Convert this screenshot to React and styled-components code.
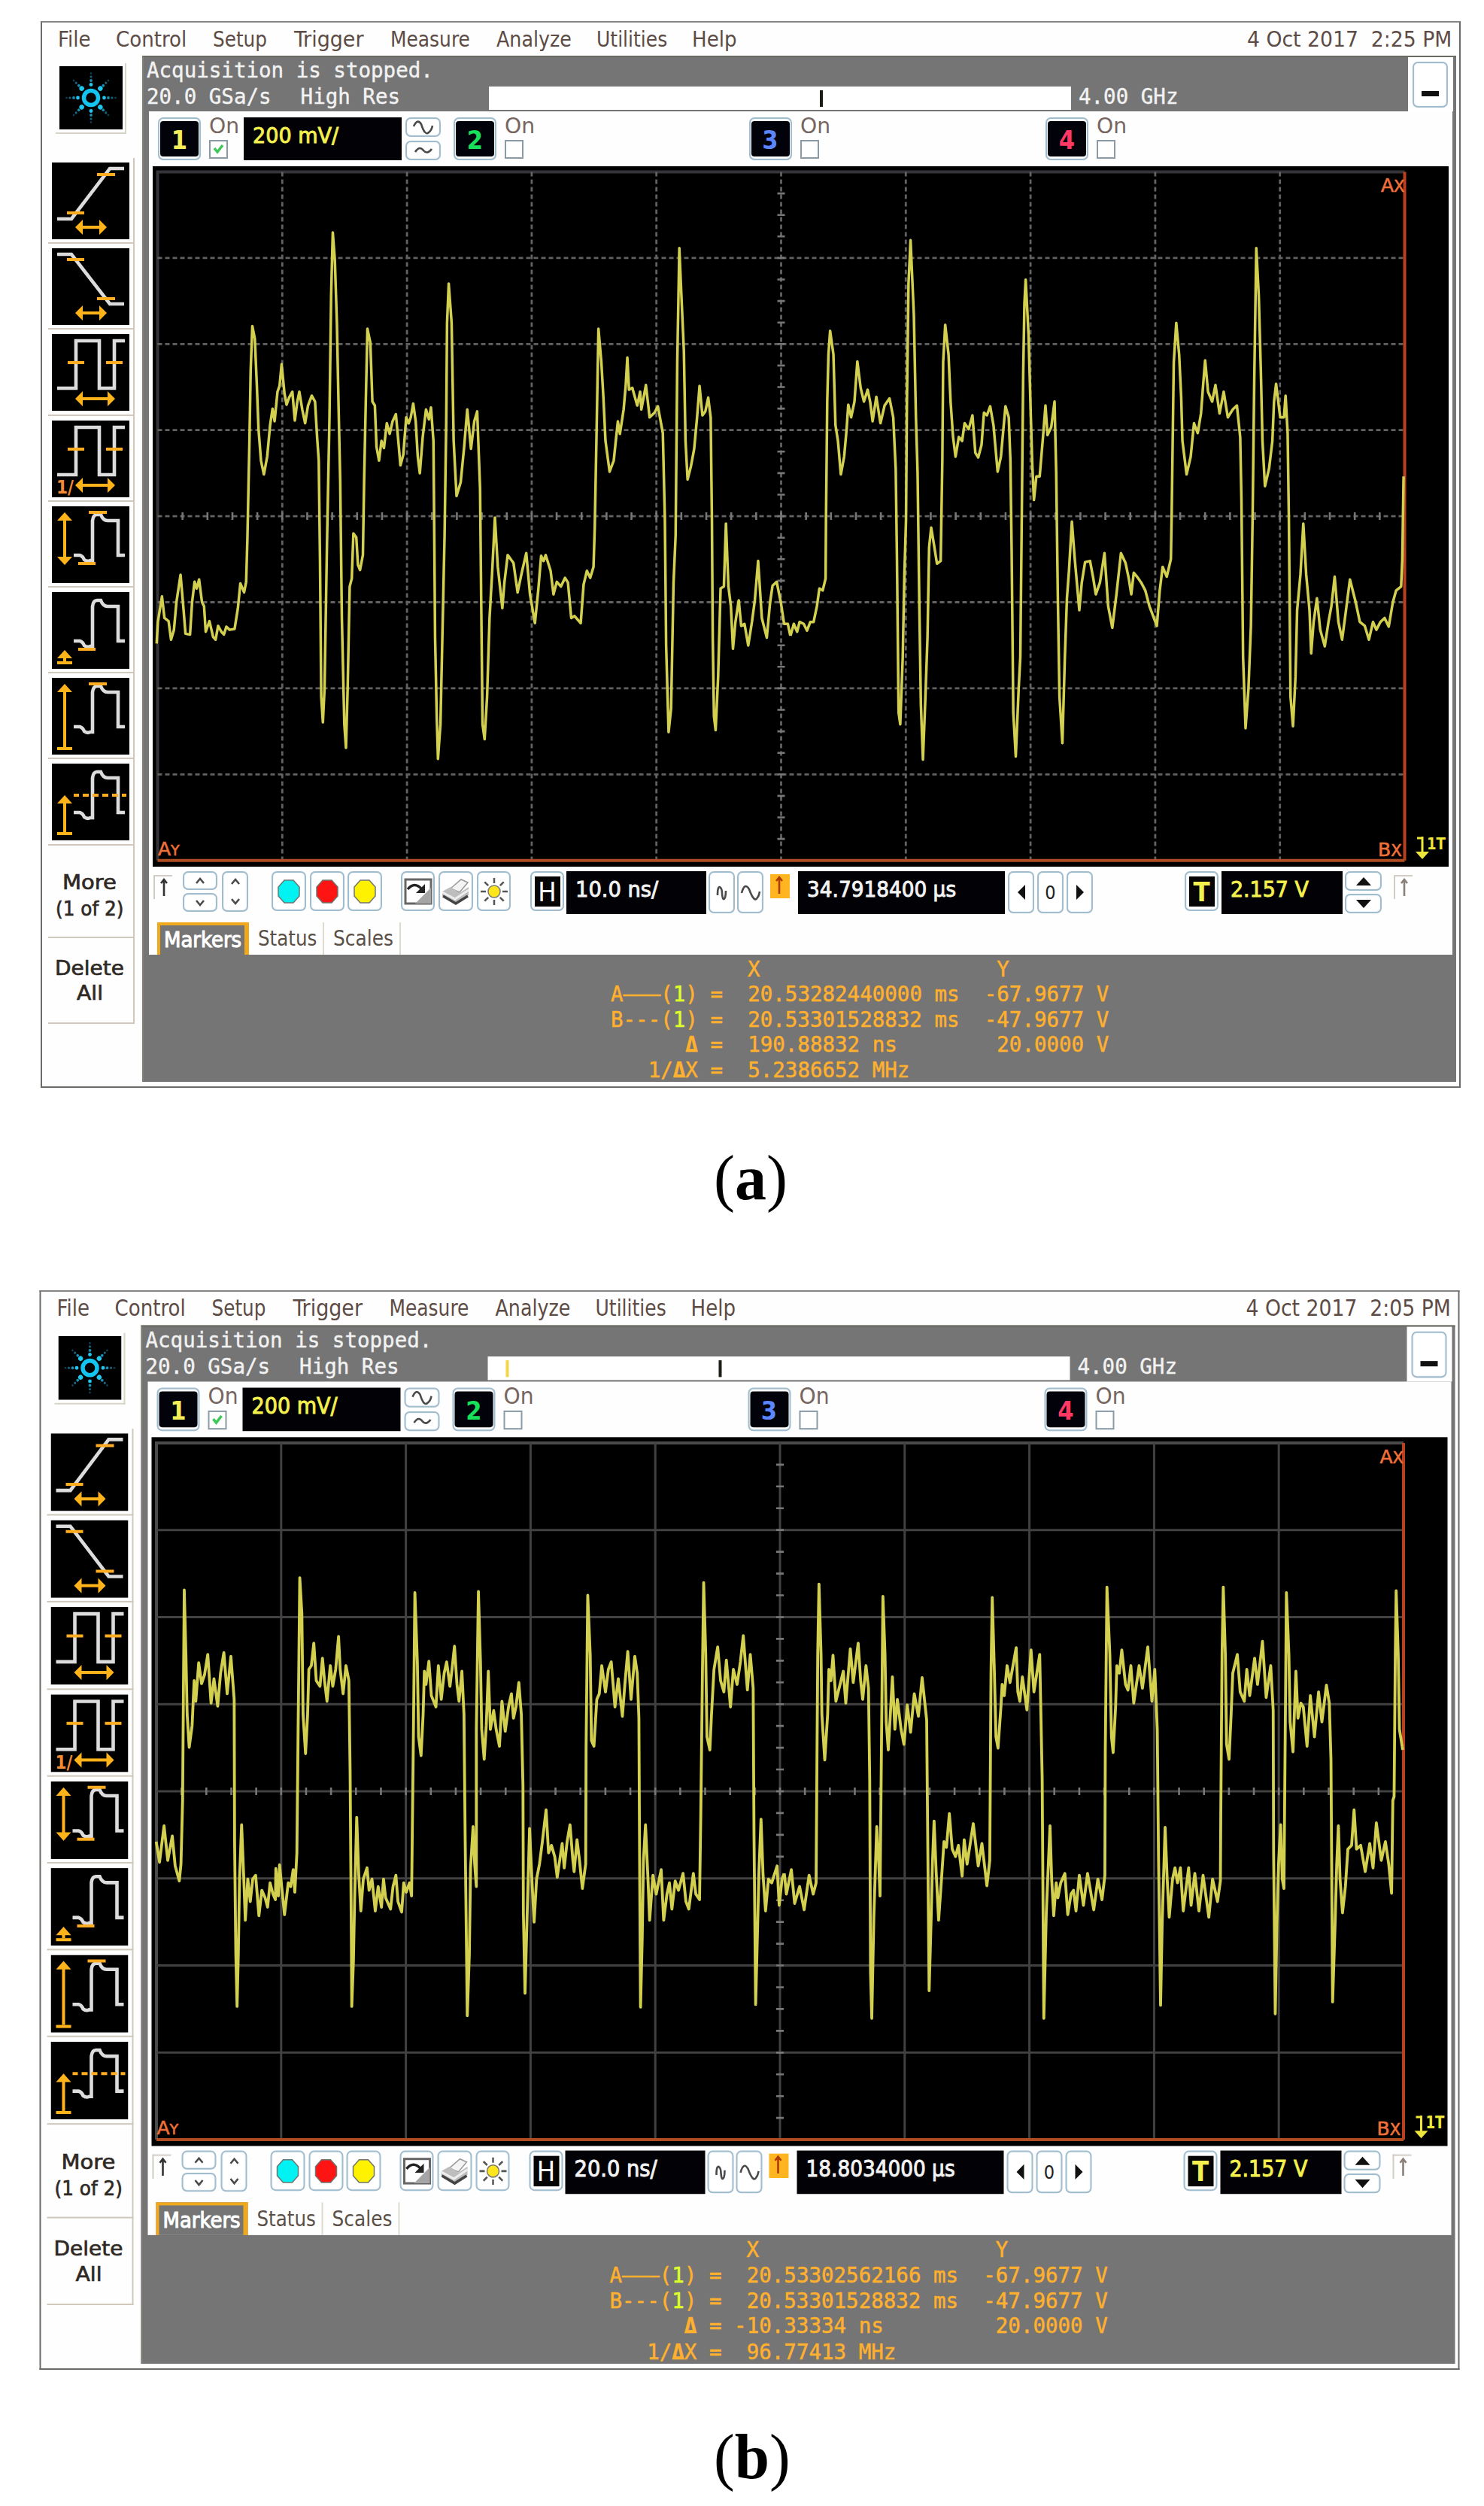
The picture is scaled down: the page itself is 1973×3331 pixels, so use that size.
import React, { useLayoutEffect, useRef, useState } from "react";
import styled, { createGlobalStyle, css } from "styled-components";

const SANS = `"DejaVu Sans Condensed", "DejaVu Sans", sans-serif`;
const MONO = `"DejaVu Sans Mono", monospace`;
const ORANGE = "#ffb02e";

const GlobalStyle = createGlobalStyle`
  body {
    margin: 0;
    background: #fff;
    font-family: ${SANS};
  }
`;

const Page = styled.div`
  box-sizing: border-box;
  width: 1973px;
  height: 3331px;
  padding: 28px 0 0 54px;
  overflow: hidden;
  background: #fff;
`;
const Figure = styled.div`
  height: ${props => props.$height}px;
`;
const Caption = styled.div`
  display: flex;
  margin: ${props => props.$gap}px 0 0 895px;
  font: 84px/90px "Liberation Serif", serif;
  color: #000;
`;
const Scope = styled.div`
  box-sizing: border-box;
  width: 1888px;
  height: 1418px;
  border: 2px solid #6c6a66;
  border-top-color: #858585;
  background: #fefefe;
  transform-origin: 0 0;
  transform: translateX(${props => props.$shift}px) scaleY(${props => props.$stretch});
`;

const MenuBar = styled.div`
  display: grid;
  grid-template-columns: 77px 129px 108px 128px 141px 133px 127px 738px 1fr;
  height: 44px;
  padding-left: 21px;
  font-size: 29px;
  line-height: 45px;
  color: #5d4c45;
`;
const Body = styled.div`
  display: flex;
  height: 1364px;
`;

/* left column */
const Sidebar = styled.div`
  width: 133px;
  flex: none;
`;
const LogoKey = styled.div`
  box-sizing: border-box;
  width: 94px;
  height: 94px;
  margin: 10px 0 32px 18px;
  padding: 4px 0 0 5px;
  border: solid #d9d4c8;
  border-width: 0 2px 2px 0;
  svg {
    display: block;
  }
`;
const Key = styled.div`
  box-sizing: border-box;
  width: 115px;
  height: ${props => props.$height || 114.2}px;
  margin-left: 8px;
  padding: ${props => props.$top || 6}px 0 0 4.5px;
  border: solid #cfc8bb;
  border-width: 0 2px 2px 0;
  svg {
    display: block;
  }
`;
const KeyText = styled.div`
  display: flex;
  flex-direction: column;
  align-items: center;
  width: 101px;
  font-size: 26px;
  line-height: ${props => props.$line}px;
  color: #2f2925;
  -webkit-text-stroke: 0.6px #2f2925;
`;

/* right part */
const Main = styled.div`
  box-sizing: border-box;
  width: 1747px;
  height: 1364px;
  border-top: 2px solid #6b6b64;
  border-left: 2px solid #807e76;
  background: #757575;
`;
const StatusBar = styled.div`
  display: flex;
  height: 72px;
`;
const StatusInfo = styled.div`
  display: grid;
  grid-template-columns: 455px 774px 1fr;
  grid-template-rows: 35.4px 36px;
  width: 1677px;
  padding-left: 4px;
  font: 27.5px/35.4px ${MONO};
  color: #f2f2f2;
  -webkit-text-stroke: 0.4px #f2f2f2;
`;
const StatusLine = styled.div`
  display: flex;
  gap: 39px;
  white-space: pre;
  grid-area: ${props => props.$row} / 1;
`;
const Bandwidth = styled.div`
  grid-area: 2 / 3;
  padding-left: 10px;
`;
const MemoryBar = styled.div`
  display: flex;
  grid-area: 2 / 2;
  height: 31px;
  margin-top: 4px;
  background: #fff;
`;
const MemoryTick = styled.i`
  width: 4px;
  height: 22px;
  margin: 5px 0 0 ${props => props.$gap}px;
  background: ${props => props.$color};
`;
const MinimizeCell = styled.div`
  box-sizing: border-box;
  width: 60px;
  padding: 6px 0 0 6px;
  background: #fff;
`;
const Button = styled.div`
  box-sizing: border-box;
  display: flex;
  flex: none;
  align-items: center;
  justify-content: center;
  width: ${props => props.$w}px;
  height: ${props => props.$h}px;
  border: 2px solid #a0bccd;
  border-radius: 7px;
  background: #fff;
  box-shadow: inset 0 0 2px #d3e1e8;
`;
const Dash = styled.div`
  width: 23px;
  height: 7px;
  margin-top: 24px;
  background: #111;
`;
const Panel = styled.div`
  width: 1733px;
  height: 1121px;
  margin-left: 7px;
  background: #fefefe;
`;

const Channels = styled.div`
  box-sizing: border-box;
  display: grid;
  grid-template-columns: 393px 392.5px 394.5px 1fr;
  height: 73px;
  padding: 8px 0 0 12px;
`;
const Channel = styled.div`
  display: flex;
  align-items: flex-start;
`;
const Digit = styled.div`
  box-sizing: border-box;
  width: 51px;
  height: 47px;
  border-radius: 4px;
  background: #02020a;
  color: ${props => props.color};
  font: bold 34px/50px ${SANS};
  text-align: center;
`;
const OnBox = styled.div`
  width: 46px;
  margin-left: 11px;
  margin-top: -6px;
  font-size: 29px;
  line-height: 34px;
  color: #776560;
`;
const Check = styled.div`
  box-sizing: border-box;
  width: 25px;
  height: 25px;
  margin-top: 2px;
  border: 2px solid #8a9ba5;
  background: #fff;
  svg {
    display: block;
  }
`;
const Readout = styled.div`
  box-sizing: border-box;
  flex: none;
  width: ${props => props.$w}px;
  height: 57px;
  padding-left: 12px;
  background: #010106;
  color: ${props => props.color || "#f2f2f2"};
  font-size: 29px;
  line-height: 48px;
  -webkit-text-stroke: 0.9px currentColor;
`;
const Stack = styled.div`
  display: flex;
  flex-direction: column;
  gap: ${props => props.$gap || 5}px;
`;

const PlotBox = styled.div`
  width: 1723px;
  height: 931px;
  margin-left: 5px;
  background: #000;
  svg {
    display: block;
  }
`;

const Toolbar = styled.div`
  display: flex;
  align-items: flex-start;
  height: 74px;
  box-sizing: border-box;
  padding: 6px 0 0 6px;
`;
const Gap = styled.div`
  width: ${props => props.$w}px;
  flex: none;
`;
const ArrowBox = styled.div`
  box-sizing: border-box;
  width: 25px;
  height: 32px;
  margin-top: 5px;
  border: solid #d2cdc4;
  border-width: 2px 0 0 2px;
  svg {
    display: block;
  }
`;
const LetterTile = styled.div`
  width: 34px;
  height: 40px;
  background: #050505;
  color: ${props => props.color};
  font: 36px/41px ${SANS};
  font-weight: ${props => (props.$bold ? "bold" : "normal")};
  text-align: center;
`;
const OrangeTile = styled.div`
  width: 26px;
  height: 32px;
  margin-top: 4px;
  background: #ffb51f;
`;
const ZeroLabel = styled.span`
  font-size: 25px;
  color: #222;
`;

const Tabs = styled.div`
  display: flex;
  height: 43px;
  padding-left: 11px;
  font-size: 28px;
  line-height: 43px;
  color: #5b5048;
`;
const Tab = styled.div`
  box-sizing: border-box;
  width: ${props => props.$w}px;
  padding: 0 0 0 12px;
  border-right: 2px solid #dedad0;
  ${props =>
    props.$active &&
    css`
      padding-left: 5px;
      border: solid #f0a81c;
      border-width: 4px 6px 0 4px;
      background: #757575;
      color: #fff;
      line-height: 40px;
      -webkit-text-stroke: 1px #fff;
    `}
`;
const Markers = styled.div`
  padding: 3px 0 0 621px;
  font: 27.5px/33.4px ${MONO};
  color: ${ORANGE};
  white-space: pre;
  -webkit-text-stroke: 0.5px ${ORANGE};
  em {
    font-style: normal;
    color: #dfff2a;
    -webkit-text-stroke-color: #dfff2a;
  }
`;

const FitBox = styled.span`
  display: block;
  width: ${props => props.$w}px;
  white-space: pre;
  span {
    display: inline-block;
    transform-origin: 0 50%;
  }
`;

// squeezes a label to the width it has on the instrument's screen
const Fit = ({ w, children }) => {
  const ref = useRef(null);
  const [ratio, setRatio] = useState(1);
  useLayoutEffect(() => {
    setRatio(w / ref.current.offsetWidth);
  }, [w]);
  return (
    <FitBox $w={w}>
      <span ref={ref} style={{ transform: `scaleX(${ratio})` }}>
        {children}
      </span>
    </FitBox>
  );
};

const Logo = () => (
  <svg width="84" height="84" viewBox="-42 -42 84 84">
    <rect x="-42" y="-42" width="84" height="84" fill="#000" />
    <circle r="9.5" fill="none" stroke="#14c4f0" strokeWidth="5.5" />
    {[0, 45, 90, 135, 180, 225, 270, 315].map(a => (
      <g key={a} transform={`rotate(${a})`}>
        <circle cx="17.5" r={a % 90 ? 3.2 : 2.4} fill="#1fc8f0" />
        <circle cx="23" r="1.9" fill="#1a8fb0" />
        <circle cx="28" r="1.6" fill="#17627c" />
        <circle cx="32.5" r="1.3" fill="#0f4458" />
      </g>
    ))}
  </svg>
);

const HArrow = ({ x1, x2 }) => (
  <g fill="#ffb31a">
    <rect x={x1 + 5} y="84" width={x2 - x1 - 10} height="4" />
    <path d={`M${x1} 86l10-10v20zM${x2} 86l-10-10v20z`} />
  </g>
);
const VArrow = ({ y1, y2, both }) => (
  <g fill="#ffb31a">
    <rect x="15" y={y1 + 5} width="4" height={y2 - y1 - 7} />
    <path d={`M17 ${y1}l10 11h-20z`} />
    {both ? (
      <path d={`M17 ${y2}l10 -11h-20z`} />
    ) : (
      <rect x="7" y={y2 - 2} width="20" height="4" />
    )}
  </g>
);
const BUMP = "M29 65H37Q41 66 43 71Q47 74 51 72H54V19Q55 11 60 11H65Q68 19 74 19H88V65H97";
const PULSE = "M7 72H32V9H63V72H83V9H97";

const ICONS = [
  {
    line: "M7 75H26L77 8H96",
    ticks: "M20 67H43M60 16H84",
    extra: <HArrow x1={31} x2={73} />
  },
  {
    line: "M7 8H26L77 74H96",
    ticks: "M20 15H43M60 67H84",
    extra: <HArrow x1={31} x2={73} />
  },
  {
    line: PULSE,
    ticks: "M21 38H43M72 38H94",
    extra: <HArrow x1={31} x2={84} />
  },
  {
    line: PULSE,
    ticks: "M21 38H43M72 38H94",
    extra: (
      <g>
        <HArrow x1={31} x2={84} />
        <text x="6" y="97" fontSize="24" fontWeight="bold" fill="#f58a35">
          1/
        </text>
      </g>
    )
  },
  {
    line: BUMP,
    ticks: "M49 8H73M35 76H58",
    extra: <VArrow y1={8} y2={78} both />
  },
  { line: BUMP, ticks: "M35 76H58", extra: <VArrow y1={77} y2={94} /> },
  { line: BUMP, ticks: "M49 8H73", extra: <VArrow y1={8} y2={94} /> },
  {
    line: BUMP,
    ticks: "M29 42h7m5 0h8m5 0h8m5 0h8m5 0h8m5 0h6",
    extra: <VArrow y1={42} y2={93} />
  }
];

const MeasureIcon = ({ icon }) => (
  <svg width="103" height="102" viewBox="0 0 103 102">
    <rect width="103" height="102" fill="#000" />
    <path d={icon.line} fill="none" stroke="#dcdcdc" strokeWidth="4.6" />
    <path d={icon.ticks} stroke="#ffac20" strokeWidth="4" />
    {icon.extra}
  </svg>
);

const Glyph = ({ w, h, d, fill = "none", width = 2.6 }) => (
  <svg width={w} height={h} viewBox={`0 0 ${w} ${h}`}>
    <path d={d} fill={fill} stroke={fill === "none" ? "#4a4a4a" : "none"} strokeWidth={width} />
  </svg>
);
const UP = "M2 9L7 3L12 9";
const DOWN = "M2 3L7 9L12 3";

const Dot = ({ color }) => (
  <Button $w={46} $h={53}>
    <svg width="34" height="34" viewBox="0 0 34 34">
      <path
        d="M11 2H23L31 11V23L23 32H11L3 23V11Z"
        fill={color}
        stroke="#6f7570"
        strokeWidth="1.5"
      />
    </svg>
  </Button>
);
const ClearIcon = () => (
  <svg width="38" height="36" viewBox="0 0 38 36">
    <rect x="2" y="2" width="34" height="32" fill="#fff" stroke="#666" strokeWidth="3" />
    <path d="M36 13V34H15Z" fill="#a5a5a5" />
    <path d="M5 15Q14 4 24 15" fill="none" stroke="#222" strokeWidth="3.5" />
    <path d="M28 8V20H16Z" fill="#222" />
  </svg>
);
const PrintIcon = () => (
  <svg width="40" height="38" viewBox="0 0 40 38">
    <path d="M13 15L27 3L36 7L25 20Z" fill="#f4f4f4" stroke="#999" strokeWidth="1.5" />
    <path d="M2 19L13 13L25 21L37 13V24L20 35L2 25Z" fill="#bdbdbd" />
    <path d="M2 20L19 29L37 17" fill="none" stroke="#eee" strokeWidth="3" />
    <path d="M3 25L20 35L36 25" fill="none" stroke="#444" strokeWidth="3.5" />
  </svg>
);
const SunIcon = () => (
  <svg width="40" height="40" viewBox="-20 -20 40 40">
    {[0, 45, 90, 135, 180, 225, 270, 315].map(a => (
      <path key={a} d="M11 0H18" stroke="#555" strokeWidth="2.5" transform={`rotate(${a})`} />
    ))}
    <circle r="8" fill="#ffe61c" stroke="#777" strokeWidth="1.5" />
  </svg>
);
const UpArrow = ({ color = "#333" }) => (
  <svg width="24" height="30" viewBox="0 0 24 30">
    <path d="M12 26V5M8 9L12 4L16 9" fill="none" stroke={color} strokeWidth="2.6" />
  </svg>
);

const COLS = [1, 2, 3, 4, 5, 6, 7, 8, 9];
const ROWS = [1, 2, 3, 4, 5, 6, 7];
const LEFT = 6.5;
const TOP = 7.5;
const DX = 165.8;
const DY = 114.4;
const RIGHT = LEFT + DX * 10;
const BOTTOM = TOP + DY * 8;

const Plot = ({ trace, solid }) => {
  const minor = [];
  for (let i = 1; i < 50; i++) {
    const x = LEFT + (i * DX) / 5;
    minor.push(`M${x} ${TOP + DY * 4 - 5}v10`);
  }
  for (let i = 1; i < 40; i++) {
    const y = TOP + (i * DY) / 4;
    if (y < BOTTOM) minor.push(`M${LEFT + DX * 5 - 5} ${y}h10`);
  }
  return (
    <PlotBox>
      <svg width="1723" height="931" viewBox="0 0 1723 931">
        <path
          d={`M${LEFT} ${BOTTOM}V${TOP}H${RIGHT}`}
          fill="none"
          stroke={solid ? "#4a4a4a" : "#353539"}
          strokeWidth="4"
        />
        <g
          stroke={solid ? "#414141" : "#626262"}
          strokeWidth={solid ? 3 : 2.8}
          strokeDasharray={solid ? "none" : "6 4"}
        >
          {COLS.map(c => (
            <path key={c} d={`M${LEFT + DX * c} ${TOP}V${BOTTOM}`} />
          ))}
          {ROWS.map(r => (
            <path key={r} d={`M${LEFT} ${TOP + DY * r}H${RIGHT}`} />
          ))}
        </g>
        <path d={minor.join("")} stroke="#777" strokeWidth="2.6" />
        <path d={`M${RIGHT} ${TOP}V${BOTTOM}`} stroke="#b8401f" strokeWidth="4" />
        <path d={`M${LEFT} ${BOTTOM}H${RIGHT}`} stroke="#b04c22" strokeWidth="4" />
        <g
          fill="none"
          stroke="#d3d050"
          strokeWidth={solid ? 3.8 : 3.5}
          strokeLinejoin="round"
          transform={trace.fit}
        >
          <polyline points={trace.first} vectorEffect="non-scaling-stroke" />
          <polyline
            points={trace.second}
            transform="translate(1531.5 0)"
            vectorEffect="non-scaling-stroke"
          />
        </g>
        <g fill="#f0703a" stroke="#f0703a" strokeWidth="0.6" fontFamily="DejaVu Sans" fontSize="25">
          <text x="1633" y="34">A<tspan fontSize="21">X</tspan></text>
          <text x="7" y="916">A<tspan fontSize="19">Y</tspan></text>
          <text x="1629" y="917">B<tspan fontSize="21">X</tspan></text>
        </g>
        <path d="M1681 893H1689M1688 891V917" stroke="#efe63a" strokeWidth="3" fill="none" />
        <path d="M1679 911H1697L1688 921Z" fill="#efe63a" />
        <text
          x="1694"
          y="908"
          fontFamily="DejaVu Sans"
          fontWeight="bold"
          fontSize="22"
          textLength="25"
          lengthAdjust="spacingAndGlyphs"
          fill="#efe63a"
        >
          1T
        </text>
      </svg>
    </PlotBox>
  );
};

const traceA = {
  fit: "matrix(0.5485 0 0 0.523 -3 -1)",
  first:
    "15,1215 18,1160 28,1095 34,1150 44,1158 50,1205 57,1180 63,1110 73,1040 80,1125 85,1190 96,1192 101,1110 107,1058 112,1075 118,1052 125,1110 130,1120 134,1185 143,1158 152,1198 158,1205 164,1170 172,1185 178,1192 184,1172 192,1180 204,1178 212,1125 218,1062 227,1085 232,1058 235,950 240,700 243,520 247,408 253,440 258,560 262,670 268,750 275,785 283,740 290,660 296,618 301,650 308,575 313,560 318,505 325,580 330,608 336,590 344,575 350,648 356,600 361,575 368,620 375,655 382,610 391,585 399,600 404,690 408,750 411,1000 414,1350 418,1415 422,1330 428,960 434,640 438,330 442,170 447,240 452,400 456,610 460,800 464,1150 470,1420 474,1480 478,1330 483,1070 488,1050 492,935 499,945 503,1015 508,1028 515,990 518,800 522,600 526,415 533,450 538,600 544,610 548,715 554,750 560,700 566,718 573,655 580,682 587,650 595,632 600,690 606,762 613,735 620,640 626,655 631,640 637,605 643,650 648,740 653,782 660,690 668,620 675,645 680,615 686,700 688,940 690,1200 694,1400 697,1508 703,1420 708,1180 713,940 717,650 719,400 723,300 730,400 735,700 742,840 752,805 760,720 768,620 777,720 785,650 792,625 799,820 802,1130 805,1420 810,1458 816,1350 822,1150 828,1040 835,895 842,1020 853,1125 858,1060 866,990 880,1010 890,1085 900,1035 911,985 920,1090 932,1163 940,1080 947,992 953,1005 958,990 970,1030 977,1090 985,1058 995,1070 1005,1048 1012,1060 1020,1150 1028,1145 1043,1163 1050,1065 1058,1030 1066,1048 1074,1020 1077,920 1081,700 1086,415 1093,500 1098,590 1103,700 1113,778 1123,750 1133,650 1138,682 1147,620 1152,560 1156,488 1160,570 1168,565 1180,610 1187,575 1190,620 1201,558 1210,640 1222,628 1230,612 1242,680 1247,900 1250,1220 1256,1440 1262,1380 1268,1060 1273,940 1277,500 1282,210 1287,330 1293,470 1297,700 1302,798 1310,765 1318,720 1325,640 1331,560 1338,635 1345,625 1352,590 1358,640 1361,900 1363,1200 1366,1400 1370,1435 1376,1300 1382,1075 1390,1070 1395,910 1401,1070 1407,1120 1412,1228 1418,1160 1426,1105 1432,1170 1440,1165 1449,1220 1458,1160 1465,1105 1473,1005 1482,1150 1494,1200 1502,1110 1508,1068 1518,1058 1528,1110 1536,1165 1545,1165 1551,1195",
  second:
    "20,1195 28,1165 36,1185 42,1160 52,1165 60,1182 68,1160 76,1160 84,1120 90,1075 98,1080 105,1050 106,900 109,600 112,480 116,420 124,480 129,660 135,700 142,785 150,740 156,670 160,608 167,640 175,600 182,498 190,565 198,600 207,570 213,600 219,650 228,588 238,655 248,610 260,592 269,640 275,770 278,1000 282,1390 286,1420 292,1250 296,1040 300,900 302,620 306,300 311,190 319,380 324,640 328,780 332,1100 336,1370 341,1510 347,1350 352,1200 356,970 361,920 368,965 375,1012 384,1005 388,750 390,500 395,405 403,480 408,600 414,690 420,740 428,690 436,700 442,655 452,670 461,635 468,730 475,742 483,710 489,628 496,635 504,612 512,660 522,778 530,740 541,612 549,640 553,750 556,980 560,1390 566,1502 573,1330 577,1250 580,950 584,530 587,350 590,290 597,430 602,620 606,760 610,850 616,790 624,790 632,690 638,610 643,685 652,665 660,600 664,780 668,1100 672,1350 679,1468 685,1250 690,1100 695,1030 702,905 709,1000 720,1130 726,1060 734,1008 746,1005 754,1050 760,1090 770,1060 781,985 790,1120 800,1175 810,1090 821,985 832,1010 840,1050 846,1090 852,1035 860,1045 870,1060 880,1080 890,1120 908,1170 915,1080 922,1020 932,1045 942,1000 944,880 949,500 955,400 962,480 967,590 970,700 980,785 990,740 998,655 1007,680 1015,630 1020,560 1025,495 1032,575 1042,600 1050,558 1060,630 1070,575 1080,640 1092,620 1102,610 1110,690 1113,850 1117,1250 1123,1430 1130,1330 1136,1170 1140,900 1144,550 1149,210 1155,330 1160,520 1164,700 1170,815 1180,770 1188,700 1192,600 1197,555 1207,640 1216,640 1220,585 1225,680 1228,900 1232,1350 1238,1425 1244,1300 1248,1130 1256,1040 1263,910 1270,1040 1278,1130 1282,1240 1288,1160 1296,1100 1304,1180 1315,1222 1324,1160 1331,1120 1339,1045 1348,1160 1357,1205 1364,1150 1376,1052 1390,1110 1400,1160 1412,1170 1422,1205 1432,1160 1440,1180 1450,1160 1460,1150 1470,1172 1480,1110 1488,1080 1500,1070 1503,1000 1506,790"
};

const traceB = {
  fit: "matrix(0.5485 0 0 0.4917 -1.5 88.7)",
  first:
    "14,900 22,955 33,858 42,950 53,885 60,965 70,1005 74,960 78,790 80,500 82,228 86,400 89,560 94,648 101,590 106,470 110,525 117,422 124,478 131,455 139,400 147,530 154,465 163,538 170,450 178,395 186,505 195,405 203,520 204,900 207,1200 210,1340 213,1200 216,1000 221,855 226,990 230,1110 236,1000 242,1060 248,1000 255,990 263,1098 270,1030 278,1050 284,1075 290,1010 297,1040 303,1055 304,972 310,1045 313,962 319,1030 325,1095 334,1010 340,1020 346,975 350,1035 355,930 358,600 362,195 367,290 370,560 376,665 381,560 384,440 390,430 396,370 402,470 411,485 417,410 422,470 428,525 436,430 442,485 449,440 456,352 460,440 467,505 474,430 481,470 484,710 487,1150 488,1340 492,1220 495,1050 500,835 505,990 510,1085 516,1000 525,970 530,1030 537,1000 545,1085 552,1020 560,1075 565,1000 570,1050 582,1080 588,1020 595,990 600,1060 609,1088 614,1010 620,1035 628,1010 633,1045 637,660 641,235 647,420 650,620 656,670 661,560 664,445 668,480 675,418 681,510 692,540 698,430 705,520 712,450 718,420 726,485 731,440 737,378 743,480 748,525 755,445 760,560 763,900 768,1365 773,1200 776,970 782,860 786,960 790,1020 790,600 795,232 800,420 803,600 809,680 814,590 819,445 824,600 832,550 838,600 846,645 852,525 860,605 868,540 875,505 880,570 886,540 893,475 899,560 903,750 904,1090 908,1305 913,1100 919,865 925,1010 930,1115 936,1000 943,960 950,900 959,815 965,930 972,910 980,940 986,995 998,905 1003,970 1010,900 1017,855 1024,950 1027,980 1034,895 1040,950 1047,1025 1055,960 1056,650 1060,242 1066,400 1069,630 1075,645 1082,520 1088,505 1094,430 1103,500 1110,440 1117,420 1126,540 1134,465 1144,565 1150,480 1157,392 1165,520 1174,405 1180,450 1184,570 1186,1000 1188,1342 1192,1160 1195,950 1200,855 1206,1000 1210,1110 1218,990 1226,1040 1238,975 1244,1110 1252,1040 1258,1010 1264,1080 1272,1005 1280,1030 1291,985 1298,1060 1305,1080 1316,985 1322,1040 1331,1055 1334,830 1338,450 1341,208 1346,400 1349,620 1356,655 1360,560 1366,440 1375,380 1382,470 1390,500 1396,415 1406,540 1413,440 1422,480 1430,420 1437,350 1447,495 1454,400 1461,490 1463,880 1467,1335 1471,1160 1475,980 1480,840 1485,990 1491,1085 1498,1000 1506,1010 1519,965 1524,1070 1531,1000 1536,985",
  second:
    "5,985 10,1040 22,975 30,1065 42,1020 53,1082 65,990 75,1040 82,1010 84,700 86,400 89,212 94,400 96,560 103,682 110,560 113,440 118,470 123,402 130,525 148,445 154,530 165,385 172,475 184,370 190,470 195,520 203,430 209,490 212,735 214,1250 217,1372 222,1100 229,860 234,960 237,1045 240,700 244,245 249,400 252,580 257,655 262,560 267,460 273,600 279,520 288,600 295,640 303,535 311,608 320,505 330,565 339,462 350,575 353,940 356,1298 361,1100 364,960 368,845 373,980 379,1110 386,1000 392,900 398,915 405,825 412,920 420,940 427,910 436,992 441,895 448,960 463,852 475,965 484,905 496,1018 503,950 506,450 509,248 514,440 518,620 523,650 530,540 533,480 538,510 545,430 552,475 567,382 571,500 576,525 582,460 593,548 603,388 610,500 624,400 630,730 634,1372 640,1090 645,960 649,858 653,1000 658,1098 664,1010 668,1050 675,1010 685,985 692,1095 700,1040 706,1030 712,1085 720,990 730,1070 740,985 755,1082 765,1000 775,1055 782,990 783,655 787,220 794,400 798,620 802,662 808,540 811,430 817,450 823,388 832,480 838,495 845,430 852,530 865,430 873,490 886,380 896,525 903,440 909,600 912,940 917,1337 921,1110 928,862 933,1000 938,1102 946,1000 952,970 958,1010 965,970 972,1085 985,970 991,1070 1000,985 1010,1085 1020,990 1034,1102 1043,1000 1055,1060 1062,1005 1063,820 1066,400 1069,220 1074,400 1077,640 1083,680 1088,560 1092,450 1103,400 1110,500 1120,525 1126,440 1133,510 1145,410 1152,480 1164,365 1173,515 1184,430 1190,550 1191,930 1195,1360 1199,1120 1203,960 1208,855 1212,1000 1216,1025 1220,500 1222,235 1228,400 1231,580 1238,660 1245,445 1250,570 1257,530 1263,540 1272,645 1280,510 1290,620 1300,500 1308,580 1319,482 1326,530 1330,680 1334,1328 1340,1120 1344,960 1348,858 1352,1000 1358,1090 1365,1020 1371,920 1380,910 1386,815 1392,920 1402,910 1413,980 1424,905 1432,970 1440,850 1452,950 1462,900 1470,960 1477,1038 1480,790 1483,780 1486,400 1488,230 1493,400 1496,600 1504,655"
};

const MENU = [
  ["File", 43],
  ["Control", 94],
  ["Setup", 72],
  ["Trigger", 93],
  ["Measure", 106],
  ["Analyze", 100],
  ["Utilities", 94],
  ["Help", 60]
];
const CHANNELS = [
  ["1", "#f4ee5a"],
  ["2", "#17e05a"],
  ["3", "#5b86ff"],
  ["4", "#ff3864"]
];

const Oscilloscope = ({ data }) => (
  <Scope $shift={data.shift} $stretch={data.stretch}>
    <MenuBar>
      {MENU.map(([name, w]) => (
        <Fit key={name} w={w}>{name}</Fit>
      ))}
      <Fit w={272}>{data.date}</Fit>
    </MenuBar>
    <Body>
      <Sidebar>
        <LogoKey>
          <Logo />
        </LogoKey>
        {ICONS.map((icon, i) => (
          <Key key={i}>
            <MeasureIcon icon={icon} />
          </Key>
        ))}
        <Key $height={123.5} $top={32}>
          <KeyText $line={35}>
            <Fit w={72}>More</Fit>
            <Fit w={90}>(1 of 2)</Fit>
          </KeyText>
        </Key>
        <Key $height={114} $top={24}>
          <KeyText $line={33}>
            <Fit w={92}>Delete</Fit>
            <Fit w={35}>All</Fit>
          </KeyText>
        </Key>
      </Sidebar>
      <Main>
        <StatusBar>
          <StatusInfo>
            <StatusLine $row={1}>Acquisition is stopped.</StatusLine>
            <StatusLine $row={2}>
              <span>20.0 GSa/s</span>
              <span>High Res</span>
            </StatusLine>
            <MemoryBar>
              {data.ticks.map(([gap, color]) => (
                <MemoryTick key={color} $gap={gap} $color={color} />
              ))}
            </MemoryBar>
            <Bandwidth>4.00 GHz</Bandwidth>
          </StatusInfo>
          <MinimizeCell>
            <Button $w={47} $h={61}>
              <Dash />
            </Button>
          </MinimizeCell>
        </StatusBar>
        <Panel>
          <Channels>
            {CHANNELS.map(([n, color], i) => (
              <Channel key={n}>
                <Button $w={57} $h={57}>
                  <Digit color={color}>{n}</Digit>
                </Button>
                <OnBox>
                  <Fit w={40}>On</Fit>
                  <Check>
                    {i === 0 && (
                      <svg width="21" height="21" viewBox="0 0 21 21">
                        <path d="M5 9L9 14L16 5" fill="none" stroke="#3cc957" strokeWidth="3.5" />
                      </svg>
                    )}
                  </Check>
                </OnBox>
                {i === 0 && (
                  <>
                    <Readout $w={210} color="#f4f04e">
                      <Fit w={114}>200 mV/</Fit>
                    </Readout>
                    <Gap $w={5} />
                    <Stack>
                      <Button $w={47} $h={26}>
                        <Glyph w={30} h={20} d="M2 9Q7 -2 12 6Q17 22 22 17Q26 14 27 8" />
                      </Button>
                      <Button $w={47} $h={26}>
                        <Glyph w={30} h={20} d="M4 12Q10 3 15 10Q20 16 26 8" />
                      </Button>
                    </Stack>
                  </>
                )}
              </Channel>
            ))}
          </Channels>
          <Plot trace={data.trace} solid={data.solidGrid} />
          <Toolbar>
            <ArrowBox>
              <UpArrow />
            </ArrowBox>
            <Gap $w={14} />
            <Stack $gap={4}>
              <Button $w={46} $h={25}>
                <Glyph w={14} h={12} d={UP} />
              </Button>
              <Button $w={46} $h={25}>
                <Glyph w={14} h={12} d={DOWN} />
              </Button>
            </Stack>
            <Gap $w={6} />
            <Button $w={35} $h={54}>
              <Stack $gap={14}>
                <Glyph w={14} h={12} d={UP} />
                <Glyph w={14} h={12} d={DOWN} />
              </Stack>
            </Button>
            <Gap $w={31} />
            <Dot color="#00f2f2" />
            <Gap $w={5} />
            <Dot color="#ff1414" />
            <Gap $w={4} />
            <Dot color="#fff200" />
            <Gap $w={25} />
            <Button $w={45} $h={53}>
              <ClearIcon />
            </Button>
            <Gap $w={5} />
            <Button $w={46} $h={53}>
              <PrintIcon />
            </Button>
            <Gap $w={5} />
            <Button $w={45} $h={53}>
              <SunIcon />
            </Button>
            <Gap $w={26} />
            <Button $w={45} $h={53}>
              <LetterTile color="#fff">H</LetterTile>
            </Button>
            <Gap $w={3} />
            <Readout $w={186}>
              <Fit w={110}>{data.timebase}</Fit>
            </Readout>
            <Gap $w={3} />
            <Button $w={35} $h={56}>
              <Glyph w={20} h={30} d="M4 19Q4 5 8 9Q10 11 10 17Q11 28 14 22Q15 19 15 13" />
            </Button>
            <Gap $w={3} />
            <Button $w={35} $h={56}>
              <Glyph w={28} h={30} d="M2 16Q6 1 12 11Q19 30 23 22Q25 20 26 14" />
            </Button>
            <Gap $w={9} />
            <OrangeTile>
              <UpArrow color="#b03a00" />
            </OrangeTile>
            <Gap $w={11} />
            <Readout $w={275}>
              <Fit w={198}>{data.delay}</Fit>
            </Readout>
            <Gap $w={4} />
            <Button $w={35} $h={56}>
              <Glyph w={12} h={22} fill="#111" d="M11 1V21L1 11Z" />
            </Button>
            <Gap $w={4} />
            <Button $w={35} $h={56}>
              <ZeroLabel>0</ZeroLabel>
            </Button>
            <Gap $w={4} />
            <Button $w={35} $h={56}>
              <Glyph w={12} h={22} fill="#111" d="M1 1V21L11 11Z" />
            </Button>
            <Gap $w={122} />
            <Button $w={45} $h={53}>
              <LetterTile color="#f4f04e" $bold>T</LetterTile>
            </Button>
            <Gap $w={4} />
            <Readout $w={161} color="#f4f04e">
              <Fit w={104}>2.157 V</Fit>
            </Readout>
            <Gap $w={3} />
            <Stack $gap={4}>
              <Button $w={49} $h={26}>
                <Glyph w={22} h={13} fill="#111" d="M1 12H21L11 1Z" />
              </Button>
              <Button $w={49} $h={26}>
                <Glyph w={22} h={13} fill="#111" d="M1 1H21L11 12Z" />
              </Button>
            </Stack>
            <Gap $w={16} />
            <ArrowBox>
              <UpArrow color="#8a8078" />
            </ArrowBox>
          </Toolbar>
          <Tabs>
            <Tab $w={122} $active>
              <Fit w={103}>Markers</Fit>
            </Tab>
            <Tab $w={100}>
              <Fit w={78}>Status</Fit>
            </Tab>
            <Tab $w={102}>
              <Fit w={80}>Scales</Fit>
            </Tab>
          </Tabs>
        </Panel>
        <Markers>
          <div>{"           X                   Y"}</div>
          <div>
            {"A———("}<em>1</em>{") =  "}{data.ax}{" ms  -67.9677 V"}
          </div>
          <div>
            {"B---("}<em>1</em>{") =  20.53301528832 ms  -47.9677 V"}
          </div>
          <div>
            {"      "}<b>Δ</b>{" = "}{data.delta}{"20.0000 V"}
          </div>
          <div>
            {"   1/"}<b>Δ</b>{"X =  "}{data.inverse}
          </div>
        </Markers>
      </Main>
    </Body>
  </Scope>
);

const scopeA = {
  shift: 0,
  stretch: 1,
  date: "4 Oct 2017  2:25 PM",
  ticks: [[440, "#1d1d14"]],
  trace: traceA,
  solidGrid: false,
  timebase: "10.0 ns/",
  delay: "34.7918400 µs",
  ax: "20.53282440000",
  delta: " 190.88832 ns        ",
  inverse: "5.2386652 MHz"
};
const scopeB = {
  shift: -1.5,
  stretch: 1.012,
  date: "4 Oct 2017  2:05 PM",
  ticks: [[24, "#f5d548"], [279, "#1d1d14"]],
  trace: traceB,
  solidGrid: true,
  timebase: "20.0 ns/",
  delay: "18.8034000 µs",
  ax: "20.53302562166",
  delta: "-10.33334 ns         ",
  inverse: "96.77413 MHz"
};

const App = () => (
  <Page>
    <GlobalStyle />
    <Figure $height={1687}>
      <Oscilloscope data={scopeA} />
      <Caption $gap={75}>
        <Fit w={98}>(<b>a</b>)</Fit>
      </Caption>
    </Figure>
    <Figure $height={1616}>
      <Oscilloscope data={scopeB} />
      <Caption $gap={88}>
        <Fit w={102}>(<b>b</b>)</Fit>
      </Caption>
    </Figure>
  </Page>
);

export default App;
